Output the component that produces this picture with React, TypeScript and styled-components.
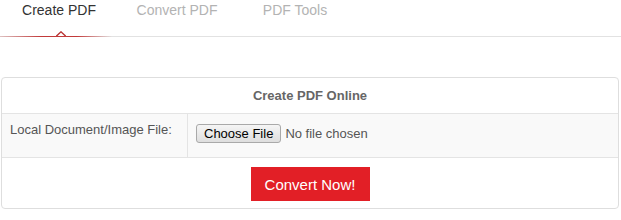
import React from "react";
import styled, { createGlobalStyle } from "styled-components";

const Global = createGlobalStyle`
  html, body { margin: 0; padding: 0; background: #fff; }
  body { font-family: Arial, "Liberation Sans", sans-serif; }
`;

const Page = styled.div`
  width: 621px;
  display: flex;
  flex-direction: column;
`;

const TabBar = styled.nav`
  display: flex;
  height: 36px;
  border-bottom: 1px solid #e2e2e2;
`;

const Tab = styled.div<{ $active?: boolean }>`
  position: relative;
  width: 118px;
  text-align: center;
  font-size: 14px;
  line-height: 20px;
  color: ${(p) => (p.$active ? "#333" : "#b3b3b3")};
  cursor: pointer;
  ${(p) =>
    p.$active &&
    `
    &::after {
      content: "";
      position: absolute;
      left: 0;
      right: 0;
      bottom: -1px;
      height: 1px;
      background: linear-gradient(to right, rgba(204,60,60,0.2), #c23a3a 35%, #c23a3a 65%, rgba(204,60,60,0) 95%);
    }
  `}
`;

const Caret = styled.svg`
  position: absolute;
  left: 50%;
  bottom: -1px;
  margin-left: -3px;
  width: 10px;
  height: 6px;
`;

const Card = styled.div`
  margin: 40px 2px 0 1px;
  border: 1px solid #dedede;
  border-radius: 4px;
  overflow: hidden;
`;

const CardHeader = styled.div`
  height: 35px;
  display: flex;
  align-items: center;
  justify-content: center;
  font-size: 13px;
  font-weight: bold;
  color: #666;
  border-bottom: 1px solid #e4e4e4;
`;

const FieldRow = styled.div`
  display: flex;
  height: 43px;
  background: #f9f9f9;
  border-bottom: 1px solid #e4e4e4;
`;

const LabelCell = styled.label`
  width: 177px;
  padding: 7px 0 0 8px;
  border-right: 1px solid #e4e4e4;
  font-size: 13px;
  line-height: 18px;
  color: #555;
`;

const InputCell = styled.div`
  flex: 1;
  padding: 10px 0 0 8px;
`;

const FileInput = styled.input`
  font-family: Arial, "Liberation Sans", sans-serif;
  font-size: 13px;
  color: #555;
  &::file-selector-button {
    font-family: Arial, "Liberation Sans", sans-serif;
    font-size: 13px;
    color: #000;
    height: 19px;
    padding: 0 7px;
    margin: 0 4px 0 0;
    border: 1px solid #a9a9a9;
    border-radius: 3px;
    background: linear-gradient(#f5f5f5, #dedede);
  }
`;

const ActionRow = styled.div`
  height: 50px;
  display: flex;
  justify-content: center;
  align-items: flex-start;
  padding-top: 9px;
  box-sizing: border-box;
`;

const ConvertButton = styled.button`
  width: 119px;
  height: 34px;
  border: none;
  border-radius: 0;
  background: #e21f26;
  color: #fff;
  font-family: Arial, "Liberation Sans", sans-serif;
  font-size: 15px;
  cursor: pointer;
`;

export default function App() {
  return (
    <Page>
      <Global />
      <TabBar>
        <Tab $active>
          Create PDF
          <Caret viewBox="0 0 10 6">
            <path d="M0 5.5 L5 0.8 L10 5.5" fill="#fff" stroke="#b83232" strokeWidth="1.3" />
          </Caret>
        </Tab>
        <Tab>Convert PDF</Tab>
        <Tab>PDF Tools</Tab>
      </TabBar>
      <Card>
        <CardHeader>Create PDF Online</CardHeader>
        <FieldRow>
          <LabelCell htmlFor="file">Local Document/Image File:</LabelCell>
          <InputCell>
            <FileInput id="file" type="file" />
          </InputCell>
        </FieldRow>
        <ActionRow>
          <ConvertButton>Convert Now!</ConvertButton>
        </ActionRow>
      </Card>
    </Page>
  );
}
